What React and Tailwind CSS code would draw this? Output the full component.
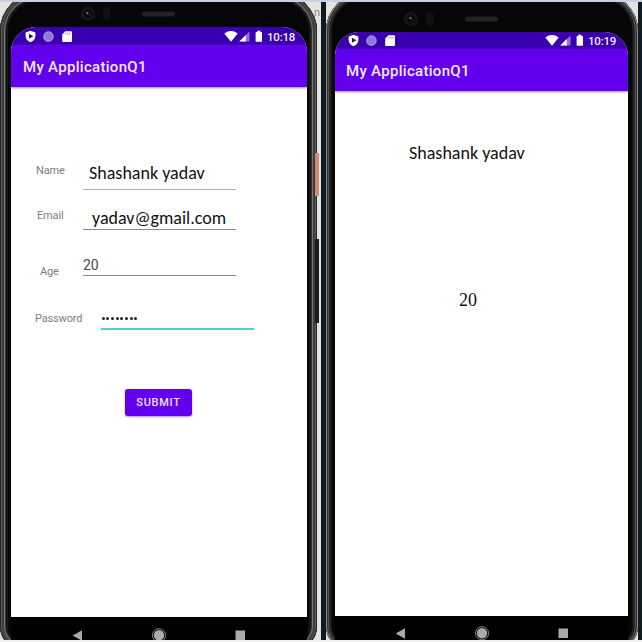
import React from "react";

function StatusBar({ time, className }) {
  return (
    <div className={`flex shrink-0 items-start justify-between bg-[#3a00b0] ${className}`}>
      <svg width="48" height="14" viewBox="0 0 48 14" className="shrink-0">
        <path d="M5.5 0.8 L10.4 2.6 V6 C10.4 9 8.2 11.3 5.5 12.3 C2.8 11.3 0.6 9 0.6 6 V2.6 Z" fill="#fff" />
        <path d="M4 3.8 L8.3 6.3 L4 8.8 Z" fill="#23105e" />
        <circle cx="23.5" cy="6.5" r="5" fill="#8f78dc" />
        <path d="M18.9 4.6 A5 5 0 1 0 28 8.7 A5 5 0 0 1 18.9 4.6 Z" fill="#c9bdf0" opacity=".65" />
        <circle cx="23.5" cy="6.5" r="4.7" fill="none" stroke="#b3a3e8" strokeWidth=".7" />
        <path d="M40.3 1.3 H46 Q47 1.3 47 2.3 V11 Q47 12 46 12 H38.2 Q37.2 12 37.2 11 V4.4 Z" fill="#fff" />
        <path d="M40.8 2.6 V4.5 M42.8 2.6 V4.5 M44.8 2.6 V4.5" stroke="#8469d4" strokeWidth=".8" />
      </svg>
      <div className="flex items-start">
        <svg width="40" height="14" viewBox="0 0 40 14" className="shrink-0">
          <path d="M0.3 3.4 Q7 -1.2 13.7 3.4 L7 11.7 Z" fill="#fff" />
          <path d="M25.5 1.4 V11.6 H15.3 Z" fill="#8c70dc" />
          <path d="M21.8 5.1 V11.6 H15.3 Z" fill="#fff" />
          <path d="M33.2 0.8 H36.4 V2 H37.2 Q38 2 38 2.8 V10.9 Q38 11.8 37.2 11.8 H32.4 Q31.6 11.8 31.6 10.9 V2.8 Q31.6 2 32.4 2 H33.2 Z" fill="#fff" />
        </svg>
        <span className="ml-[3px] w-[28px] whitespace-nowrap font-['Roboto',sans-serif] text-[11.5px] font-medium leading-[14px] tracking-[-0.2px] text-[#f3efff]">
          {time}
        </span>
      </div>
    </div>
  );
}

function Bezel({ className }) {
  return (
    <div className={`flex shrink-0 items-start ${className}`}>
      <svg width="120" height="16" viewBox="0 0 120 16">
        <circle cx="8" cy="8" r="7.2" fill="#151516" />
        <circle cx="8" cy="8" r="4.2" fill="#0a0a0b" />
        <circle cx="7.4" cy="7.2" r="1.1" fill="#777" />
        <circle cx="10" cy="9" r=".7" fill="#444" />
        <rect x="23" y="1" width="7.5" height="14" rx="3" fill="#101011" />
        <rect x="62" y="5.5" width="33" height="5" rx="2.2" fill="#222223" />
      </svg>
    </div>
  );
}

function NavBar({ className }) {
  return (
    <div className={`flex flex-1 items-start bg-black ${className}`}>
      <svg width="180" height="17" viewBox="0 0 180 17" className="shrink-0">
        <path d="M10 3.2 V13.8 L0.7 8.5 Z" fill="#aaa" />
        <circle cx="87" cy="8.3" r="6.6" fill="none" stroke="#858585" strokeWidth="1" />
        <circle cx="87" cy="8.3" r="5.2" fill="#aaa" />
        <rect x="163.5" y="3.5" width="9.5" height="9.5" fill="#aaa" />
      </svg>
    </div>
  );
}

function Field({ label, row, labelClass, inputClass, children }) {
  return (
    <div className={`flex ${row}`}>
      <span className={`shrink-0 whitespace-nowrap font-['Roboto',sans-serif] text-[11px] leading-[14px] tracking-[-0.15px] text-[#7d7d7d] ${labelClass}`}>
        {label}
      </span>
      <div className={`w-[153px] shrink-0 whitespace-nowrap ${inputClass}`}>{children}</div>
    </div>
  );
}

export default function App() {
  return (
    <div className="flex h-[642px] w-[642px] flex-col overflow-hidden bg-[#f0f0f0]">
      <div className="h-[2px] shrink-0 bg-[#c6d1e3]" />
      <div className="relative flex h-[638px] overflow-hidden bg-[#e4e3e0]">
        <span className="absolute left-[314px] top-[5px] font-['Roboto',sans-serif] text-[11px] leading-[12px] text-[#888]">n</span>

        {/* Entry form phone */}
        <div className="-mt-[9px] h-[657px] w-[317px] shrink-0 overflow-hidden rounded-[38px] rounded-b-[24px] bg-[#060606] pl-[11px] pr-[10px] shadow-[inset_0_0_0_1px_#262626,inset_0_0_0_2px_#595959,inset_0_0_0_4px_#3d3d3d,inset_0_0_0_5px_#777777,inset_0_0_0_6px_#333333,inset_0_0_0_8px_#171717]">
          <div className="flex h-full flex-col">
            <Bezel className="h-[34px] pl-[69px] pt-[13px]" />
            <div className="flex h-[590px] shrink-0 flex-col overflow-hidden rounded-t-[25px] bg-white">
              <StatusBar time="10:18" className="h-[18px] pl-[14px] pr-[12px] pt-[3px]" />
              <div className="flex h-[42px] shrink-0 items-center bg-[#6200ee] pb-px pl-[12px] pt-[3px] font-['Roboto',sans-serif] text-[15px] font-medium leading-[18px] tracking-[0.3px] text-[#f1e9ff] shadow-[0_1px_2px_#9a86b8]">
                My ApplicationQ1
              </div>
              <div className="flex flex-col pt-[64px]">
                <Field label="Name" row="h-[39px]" labelClass="w-[72px] pl-[25px] pt-[13px]" inputClass="border-b border-b-[#b0b0b0] pl-[6px] pt-[12px]">
                  <span className="block font-['Carlito','Lato',sans-serif] text-[18px] leading-[20px] text-[#111]">Shashank yadav</span>
                </Field>
                <Field label="Email" row="h-[40px]" labelClass="w-[72px] pl-[26px] pt-[19px]" inputClass="border-b border-b-[#8a8a8a] pl-[9px] pt-[18px]">
                  <span className="block font-['Carlito','Lato',sans-serif] text-[18px] leading-[20px] text-[#111]">yadav@gmail.com</span>
                </Field>
                <Field label="Age" row="h-[46px]" labelClass="w-[72px] pl-[29px] pt-[35px]" inputClass="border-b border-b-[#858585] pt-[26px]">
                  <span className="block font-['Roboto',sans-serif] text-[14px] leading-[18px] text-[#4a4a4a]">20</span>
                </Field>
                <Field label="Password" row="h-[54px]" labelClass="w-[90px] pl-[24px] pt-[36px]" inputClass="border-b-2 border-b-[#55d0c4] pt-[41px]">
                  <div className="flex gap-[1.7px] pl-[0.5px]">
                    {Array.from({ length: 8 }, (_, i) => (
                      <i key={i} className="size-[3px] rounded-full bg-[#222]" />
                    ))}
                  </div>
                </Field>
                <button className="ml-[114px] mt-[59px] h-[27px] w-[67px] rounded-[3px] bg-[#6200ee] pt-px font-['Roboto',sans-serif] text-[11px] font-medium tracking-[0.7px] text-[#eee3ff] shadow-[0_1px_2px_#a695c8]">
                  SUBMIT
                </button>
              </div>
            </div>
            <NavBar className="pl-[61px] pt-[10px]" />
          </div>
        </div>
        <div className="flex w-[4px] shrink-0 flex-col">
          <div className="-ml-[2px] mt-[151px] h-[43px] w-[4px] bg-[#d88774]" />
          <div className="-ml-[2px] mt-[43px] h-[84px] w-[4px] bg-[#1d1c1d]" />
        </div>
        <div className="w-[5px] shrink-0 bg-[#0d1b21]" />

        {/* Result phone */}
        <div className="-mt-[9px] h-[657px] w-[312px] shrink-0 overflow-hidden rounded-[38px] rounded-b-[24px] bg-[#060606] pl-[9px] pr-[10px] shadow-[inset_0_0_0_1px_#8c8c8c,inset_0_0_0_2px_#2e2e2e,inset_0_0_0_3px_#555555,inset_0_0_0_5px_#252525,inset_0_0_0_6px_#151515]">
          <div className="flex h-full flex-col">
            <Bezel className="h-[39px] pl-[68px] pt-[18px]" />
            <div className="flex h-[584px] shrink-0 flex-col overflow-hidden rounded-t-[24px] bg-white">
              <StatusBar time="10:19" className="h-[17px] pl-[13px] pr-[12px] pt-[2px]" />
              <div className="flex h-[42px] shrink-0 items-center bg-[#6200ee] pb-px pl-[11px] pt-[3px] font-['Roboto',sans-serif] text-[15px] font-medium leading-[18px] tracking-[0.3px] text-[#f1e9ff] shadow-[0_1px_2px_#9a86b8]">
                My ApplicationQ1
              </div>
              <div className="flex flex-col pt-[52px]">
                <span className="pl-[74px] font-['Carlito','Lato',sans-serif] text-[18px] leading-[20px] text-[#111]">Shashank yadav</span>
                <span className="mt-[126px] pl-[124px] font-['Liberation_Serif',serif] text-[18px] leading-[22px] text-[#111]">20</span>
              </div>
            </div>
            <NavBar className="pl-[60px] pt-[9px]" />
          </div>
        </div>
        <div className="flex-1 bg-[#101c24]" />
      </div>
      <div className="h-[2px] shrink-0 bg-[#f0f0f0]" />
    </div>
  );
}
